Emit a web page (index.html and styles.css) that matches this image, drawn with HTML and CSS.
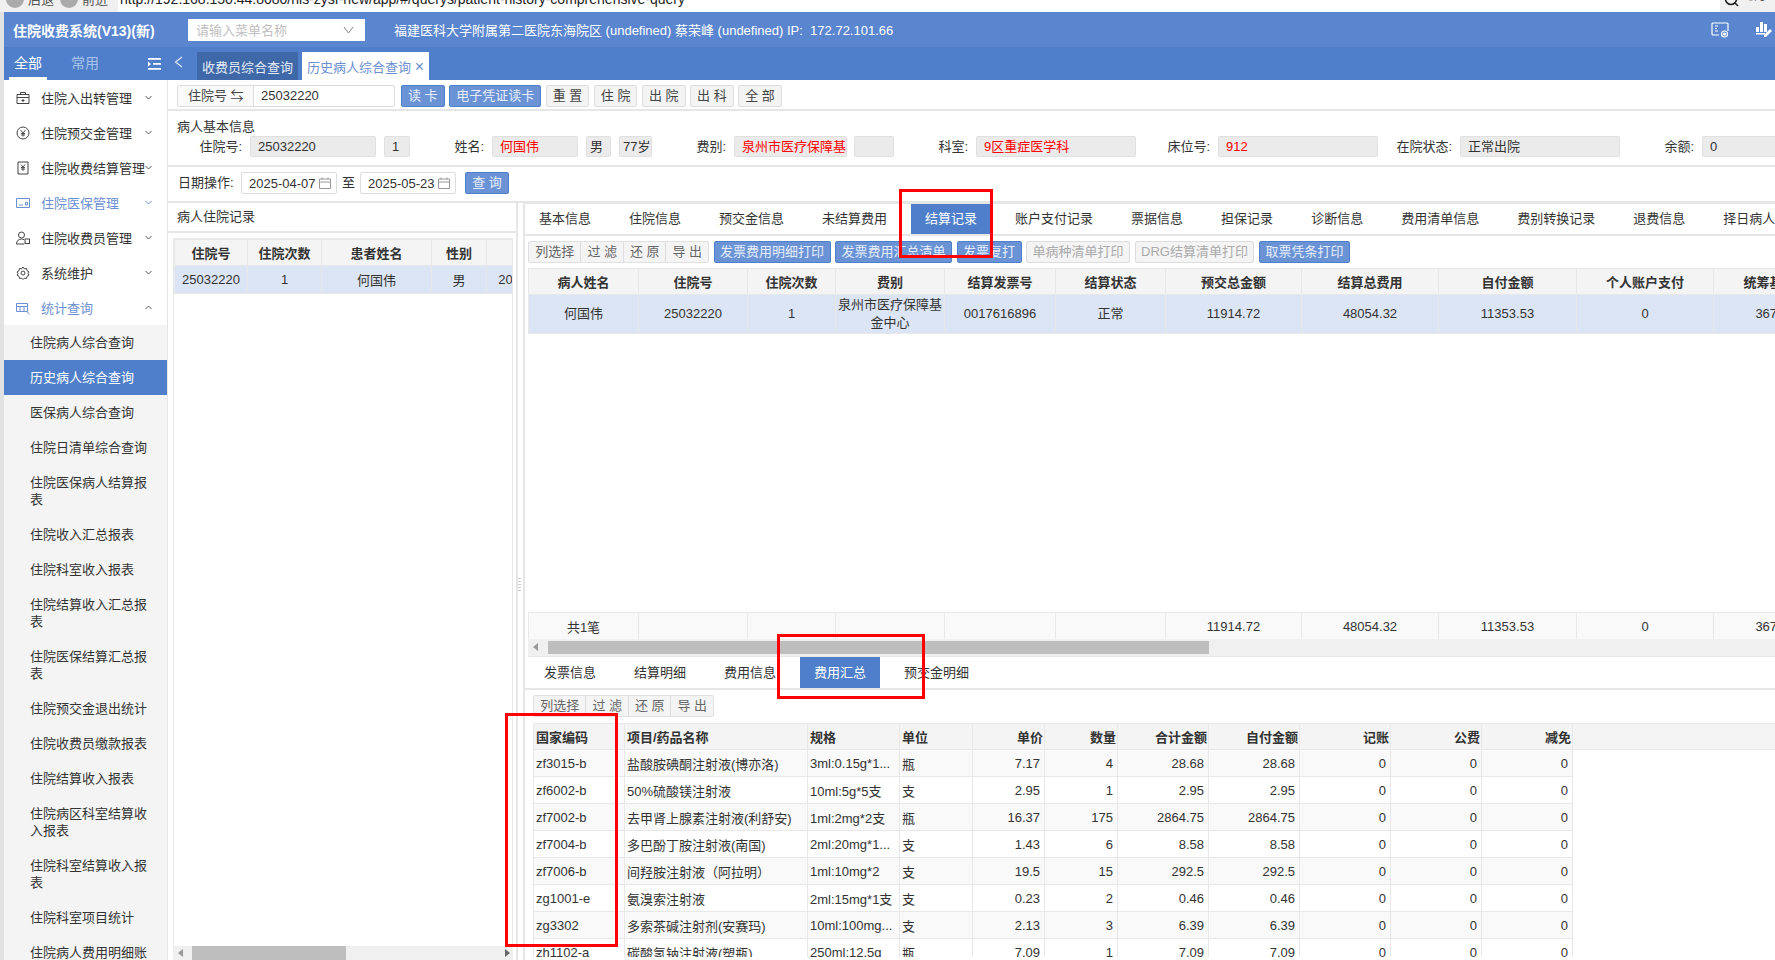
FILE: index.html
```html
<!DOCTYPE html>
<html lang="zh-CN">
<head>
    <meta charset="UTF-8">
    <title>住院收费系统</title>
    <link rel="stylesheet" href="styles.css">
</head>
<body>
    <!-- browser bar, cut off at the top of the screenshot -->
    <div class="chrome">
        <div class="chrome-nav">
            <span class="chrome-dot"></span><span class="chrome-text">后退</span>
            <span class="chrome-dot"></span><span class="chrome-text">前进</span>
        </div>
        <div class="chrome-url">http://192.168.150.44:8080/his-zysf-new/app/#/querys/patient-history-comprehensive-query</div>
        <div class="chrome-zoom">
            <svg width="16" height="16" viewBox="0 0 16 16"><circle cx="7" cy="3" r="5.5" fill="none" stroke="#222" stroke-width="1.6"/><path d="M11 7l3 3" stroke="#222" stroke-width="1.6"/></svg>
            <span class="chrome-text">缩小</span>
        </div>
    </div>

    <div class="app">
        <div class="top-bar">
            <div class="sys-title">住院收费系统(V13)(新)</div>
            <div class="menu-search">
                <span>请输入菜单名称</span>
                <svg width="11" height="8" viewBox="0 0 11 8"><path d="M1 1l4.5 6L10 1" fill="none" stroke="#888"/></svg>
            </div>
            <div class="user-info">福建医科大学附属第二医院东海院区 (undefined) 蔡荣峰 (undefined) IP:&nbsp; 172.72.101.66</div>
            <div class="top-icons">
                <svg width="18" height="16" viewBox="0 0 18 16" fill="none" stroke="#fff" stroke-width="1.2"><path d="M8 13H2a1 1 0 0 1-1-1V2a1 1 0 0 1 1-1h14a1 1 0 0 1 1 1v7"/><path d="M4 4h3M4 6.500h2M7 9H4" stroke-width="1"/><circle cx="13.500" cy="12" r="3"/><circle cx="13.500" cy="12" r="1" fill="#fff"/></svg>
                <svg width="18" height="18" viewBox="0 0 18 18" fill="#fff"><rect x="1" y="6" width="3" height="5"/><rect x="5" y="1" width="3" height="10"/><rect x="9" y="3" width="3" height="8"/><path d="M1 12h9v1.500H1z"/><path d="M15 8l2 2-6 6H9v-2z"/></svg>
            </div>
        </div>

        <div class="nav-bar">
            <div class="nav-side">
                <span class="nav-tab on">全部</span>
                <span class="nav-tab">常用</span>
                <svg class="nav-fold" width="13" height="12" viewBox="0 0 13 12" fill="#fff"><path d="M0 0h13v1.800H0zM5 5h8v1.800H5zM0 10h13v1.800H0zM0 3.500L3 6 0 8.500z"/></svg>
            </div>
            <svg class="nav-back" width="9" height="12" viewBox="0 0 9 12"><path d="M8 1L1.500 6 8 11" fill="none" stroke="#dfe8f7" stroke-width="1.200"/></svg>
            <div class="page-tab">收费员综合查询</div>
            <div class="page-tab on">历史病人综合查询 <span class="tab-x">×</span></div>
        </div>

        <div class="main">
            <aside class="sidebar">
                <div class="menu-item">
                    <svg class="menu-icon" width="14" height="14" viewBox="0 0 14 14" fill="none" stroke="#444"><path d="M1 3.500h12v9H1zM1 6.500h12M4.500 3.500V1.500h5v2M7 8v3M5.500 9.500h3"/></svg>
                    <span>住院入出转管理</span><svg class="menu-arrow" width="7" height="5" viewBox="0 0 7 5"><path d="M.5 1l3 3 3-3" fill="none" stroke="#555"/></svg>
                </div>
                <div class="menu-item">
                    <svg class="menu-icon" width="14" height="14" viewBox="0 0 14 14" fill="none" stroke="#444"><circle cx="7" cy="7" r="6"/><path d="M4.500 4L7 7l2.500-3M7 7v3.500M5 7.500h4M5 9h4" stroke-width=".9"/></svg>
                    <span>住院预交金管理</span><svg class="menu-arrow" width="7" height="5" viewBox="0 0 7 5"><path d="M.5 1l3 3 3-3" fill="none" stroke="#555"/></svg>
                </div>
                <div class="menu-item">
                    <svg class="menu-icon" width="14" height="14" viewBox="0 0 14 14" fill="none" stroke="#444"><path d="M2 1h10v12H2z"/><path d="M5 3.500L7 6l2-2.500M7 6v4M5 6.500h4M5 8h4" stroke-width=".9"/></svg>
                    <span>住院收费结算管理</span><svg class="menu-arrow tight" width="7" height="5" viewBox="0 0 7 5"><path d="M.5 1l3 3 3-3" fill="none" stroke="#555"/></svg>
                </div>
                <div class="menu-item blue">
                    <svg class="menu-icon" width="14" height="14" viewBox="0 0 14 14" fill="none" stroke="#6c90d2"><path d="M.5 2.500h13v9H.5z"/><path d="M3 9h4M9.500 6.500h2V9h-2z"/></svg>
                    <span>住院医保管理</span><svg class="menu-arrow" width="7" height="5" viewBox="0 0 7 5"><path d="M.5 1l3 3 3-3" fill="none" stroke="#6c90d2"/></svg>
                </div>
                <div class="menu-item">
                    <svg class="menu-icon" width="14" height="14" viewBox="0 0 14 14" fill="none" stroke="#444"><circle cx="5.500" cy="4" r="3"/><path d="M.5 13c0-3 2-5 5-5 1 0 2 .3 2.500.8M.5 13H8"/><rect x="9" y="8" width="4.500" height="4.500"/></svg>
                    <span>住院收费员管理</span><svg class="menu-arrow" width="7" height="5" viewBox="0 0 7 5"><path d="M.5 1l3 3 3-3" fill="none" stroke="#555"/></svg>
                </div>
                <div class="menu-item">
                    <svg class="menu-icon" width="14" height="14" viewBox="0 0 14 14" fill="none" stroke="#444"><circle cx="7" cy="7" r="2"/><path d="M7 1l1.300 1.800 2.200-.4.500 2.200L13 6l-1 1.500 1 1.600-2 1.300-.5 2.100-2.200-.3L7 13.500l-1.300-1.300-2.200.3-.5-2.100-2-1.300 1-1.600L1 6l2-1.400.5-2.200 2.200.4z"/></svg>
                    <span>系统维护</span><svg class="menu-arrow" width="7" height="5" viewBox="0 0 7 5"><path d="M.5 1l3 3 3-3" fill="none" stroke="#555"/></svg>
                </div>
                <div class="menu-item blue">
                    <svg class="menu-icon" width="14" height="14" viewBox="0 0 14 14" fill="none" stroke="#6c90d2"><path d="M.5 2.500h11v8H.5zM.5 5.500h11M4 5.500v5M8 5.500v5M10.500 10.500l3 2.500"/></svg>
                    <span>统计查询</span><svg class="menu-arrow" width="7" height="5" viewBox="0 0 7 5"><path d="M.5 4l3-3 3 3" fill="none" stroke="#555"/></svg>
                </div>
                <ul class="sub-menu">
                    <li>住院病人综合查询</li>
                    <li class="on">历史病人综合查询</li>
                    <li>医保病人综合查询</li>
                    <li>住院日清单综合查询</li>
                    <li>住院医保病人结算报表</li>
                    <li>住院收入汇总报表</li>
                    <li>住院科室收入报表</li>
                    <li>住院结算收入汇总报表</li>
                    <li>住院医保结算汇总报表</li>
                    <li>住院预交金退出统计</li>
                    <li>住院收费员缴款报表</li>
                    <li>住院结算收入报表</li>
                    <li>住院病区科室结算收入报表</li>
                    <li>住院科室结算收入报表</li>
                    <li>住院科室项目统计</li>
                    <li>住院病人费用明细账</li>
                </ul>
            </aside>

            <div class="content">
                <div class="search-row">
                    <div class="search-group">
                        <span class="search-label">住院号 ⇆</span>
                        <span class="search-value">25032220</span>
                    </div>
                    <button class="btn primary">读 卡</button>
                    <button class="btn primary">电子凭证读卡</button>
                    <button class="btn">重 置</button>
                    <button class="btn">住 院</button>
                    <button class="btn">出 院</button>
                    <button class="btn">出 科</button>
                    <button class="btn">全 部</button>
                </div>

                <div class="info-block">
                    <div class="info-title">病人基本信息</div>
                    <div class="info-row">
                        <label class="info-label">住院号:</label><span class="field f-no">25032220</span>
                        <span class="field f-times">1</span>
                        <label class="info-label">姓名:</label><span class="field f-name red">何国伟</span>
                        <span class="field f-sex">男</span>
                        <span class="field f-age">77岁</span>
                        <label class="info-label">费别:</label><span class="field f-type red">泉州市医疗保障基金中心</span>
                        <span class="field f-type2"></span>
                        <label class="info-label">科室:</label><span class="field f-wide red">9区重症医学科</span>
                        <label class="info-label">床位号:</label><span class="field f-wide red">912</span>
                        <label class="info-label">在院状态:</label><span class="field f-wide">正常出院</span>
                        <label class="info-label">余额:</label><span class="field f-wide">0</span>
                    </div>
                </div>

                <div class="date-row">
                    <label class="date-label">日期操作:</label>
                    <span class="date-input">2025-04-07
                        <svg width="12" height="12" viewBox="0 0 12 12" fill="none" stroke="#999"><path d="M.5 2h11v9.500H.5zM.5 5h11M3 .5v2M9 .5v2"/></svg>
                    </span>
                    <span class="date-to">至</span>
                    <span class="date-input">2025-05-23
                        <svg width="12" height="12" viewBox="0 0 12 12" fill="none" stroke="#999"><path d="M.5 2h11v9.500H.5zM.5 5h11M3 .5v2M9 .5v2"/></svg>
                    </span>
                    <button class="btn primary">查 询</button>
                </div>

                <div class="panels">
                    <div class="left-panel">
                        <div class="left-title">病人住院记录</div>
                        <div class="left-grid">
                            <table class="grid center">
                                <colgroup><col class="c73"><col class="c74"><col class="c110"><col class="c55"><col class="c90"></colgroup>
                                <tr><th>住院号</th><th>住院次数</th><th>患者姓名</th><th>性别</th><th></th></tr>
                                <tr class="picked"><td>25032220</td><td>1</td><td>何国伟</td><td>男</td><td>2025-04-07</td></tr>
                            </table>
                        </div>
                        <div class="hscroll left-scroll">
                            <span class="arrow-l"></span>
                            <span class="thumb"></span>
                            <span class="arrow-r"></span>
                        </div>
                    </div>

                    <div class="splitter"><span class="grip"></span></div>

                    <div class="right-panel">
                        <div class="tabs">
                            <span class="tab">基本信息</span>
                            <span class="tab">住院信息</span>
                            <span class="tab">预交金信息</span>
                            <span class="tab">未结算费用</span>
                            <span class="tab on">结算记录</span>
                            <span class="tab">账户支付记录</span>
                            <span class="tab">票据信息</span>
                            <span class="tab">担保记录</span>
                            <span class="tab">诊断信息</span>
                            <span class="tab">费用清单信息</span>
                            <span class="tab">费别转换记录</span>
                            <span class="tab">退费信息</span>
                            <span class="tab">择日病人状态</span>
                        </div>
                        <div class="tools">
                            <div class="btn-group">
                                <span class="g-first">列选择</span><span>过 滤</span><span>还 原</span><span>导 出</span>
                            </div>
                            <button class="btn primary slim">发票费用明细打印</button>
                            <button class="btn primary slim">发票费用汇总清单</button>
                            <button class="btn primary slim">发票复打</button>
                            <button class="btn off slim">单病种清单打印</button>
                            <button class="btn off slim">DRG结算清单打印</button>
                            <button class="btn primary slim">取票凭条打印</button>
                        </div>

                        <div class="settle-grid">
                            <table class="grid center">
                                <colgroup><col class="c110"><col class="c109"><col class="c88"><col class="c109"><col class="c111"><col class="c110"><col class="c136"><col class="c137"><col class="c138"><col class="c137"><col class="c138"></colgroup>
                                <tr><th>病人姓名</th><th>住院号</th><th>住院次数</th><th>费别</th><th>结算发票号</th><th>结算状态</th><th>预交总金额</th><th>结算总费用</th><th>自付金额</th><th>个人账户支付</th><th>统筹基金支付</th></tr>
                                <tr class="picked tall"><td>何国伟</td><td>25032220</td><td>1</td><td>泉州市医疗保障基金中心</td><td>0017616896</td><td>正常</td><td>11914.72</td><td>48054.32</td><td>11353.53</td><td>0</td><td>36700.79</td></tr>
                            </table>
                        </div>
                        <div class="settle-sum">
                            <table class="grid center">
                                <colgroup><col class="c110"><col class="c109"><col class="c88"><col class="c109"><col class="c111"><col class="c110"><col class="c136"><col class="c137"><col class="c138"><col class="c137"><col class="c138"></colgroup>
                                <tr class="sum"><td>共1笔</td><td></td><td></td><td></td><td></td><td></td><td>11914.72</td><td>48054.32</td><td>11353.53</td><td>0</td><td>36700.79</td></tr>
                            </table>
                        </div>
                        <div class="hscroll right-scroll">
                            <span class="arrow-l"></span>
                            <span class="thumb"></span>
                        </div>

                        <div class="tabs lower">
                            <span class="tab">发票信息</span>
                            <span class="tab">结算明细</span>
                            <span class="tab">费用信息</span>
                            <span class="tab on">费用汇总</span>
                            <span class="tab">预交金明细</span>
                        </div>
                        <div class="tools lower">
                            <div class="btn-group">
                                <span class="g-first">列选择</span><span>过 滤</span><span>还 原</span><span>导 出</span>
                            </div>
                        </div>
                        <div class="fee-grid">
                            <table class="grid">
                                <colgroup><col class="c91"><col class="c183"><col class="c92"><col class="c73"><col class="c72"><col class="c73"><col class="c91"><col class="c91"><col class="c91"><col class="c91"><col class="c91"><col></colgroup>
                                <tr><th>国家编码</th><th>项目/药品名称</th><th>规格</th><th>单位</th><th class="num">单价</th><th class="num">数量</th><th class="num">合计金额</th><th class="num">自付金额</th><th class="num">记账</th><th class="num">公费</th><th class="num">减免</th><th></th></tr>
                                <tr class="odd"><td>zf3015-b</td><td>盐酸胺碘酮注射液(博亦洛)</td><td>3ml:0.15g*1...</td><td>瓶</td><td class="num">7.17</td><td class="num">4</td><td class="num">28.68</td><td class="num">28.68</td><td class="num">0</td><td class="num">0</td><td class="num">0</td></tr>
                                <tr><td>zf6002-b</td><td>50%硫酸镁注射液</td><td>10ml:5g*5支</td><td>支</td><td class="num">2.95</td><td class="num">1</td><td class="num">2.95</td><td class="num">2.95</td><td class="num">0</td><td class="num">0</td><td class="num">0</td></tr>
                                <tr class="odd"><td>zf7002-b</td><td>去甲肾上腺素注射液(利舒安)</td><td>1ml:2mg*2支</td><td>瓶</td><td class="num">16.37</td><td class="num">175</td><td class="num">2864.75</td><td class="num">2864.75</td><td class="num">0</td><td class="num">0</td><td class="num">0</td></tr>
                                <tr><td>zf7004-b</td><td>多巴酚丁胺注射液(南国)</td><td>2ml:20mg*1...</td><td>支</td><td class="num">1.43</td><td class="num">6</td><td class="num">8.58</td><td class="num">8.58</td><td class="num">0</td><td class="num">0</td><td class="num">0</td></tr>
                                <tr class="odd"><td>zf7006-b</td><td>间羟胺注射液（阿拉明）</td><td>1ml:10mg*2</td><td>支</td><td class="num">19.5</td><td class="num">15</td><td class="num">292.5</td><td class="num">292.5</td><td class="num">0</td><td class="num">0</td><td class="num">0</td></tr>
                                <tr><td>zg1001-e</td><td>氨溴索注射液</td><td>2ml:15mg*1支</td><td>支</td><td class="num">0.23</td><td class="num">2</td><td class="num">0.46</td><td class="num">0.46</td><td class="num">0</td><td class="num">0</td><td class="num">0</td></tr>
                                <tr class="odd"><td>zg3302</td><td>多索茶碱注射剂(安赛玛)</td><td>10ml:100mg...</td><td>支</td><td class="num">2.13</td><td class="num">3</td><td class="num">6.39</td><td class="num">6.39</td><td class="num">0</td><td class="num">0</td><td class="num">0</td></tr>
                                <tr><td>zh1102-a</td><td>碳酸氢钠注射液(塑瓶)</td><td>250ml:12.5g</td><td>瓶</td><td class="num">7.09</td><td class="num">1</td><td class="num">7.09</td><td class="num">7.09</td><td class="num">0</td><td class="num">0</td><td class="num">0</td></tr>
                            </table>
                        </div>
                    </div>
                </div>
            </div>
        </div>
    </div>

    <!-- red boxes drawn on top of the screenshot -->
    <div class="mark mark-settle"></div>
    <div class="mark mark-fee"></div>
    <div class="mark mark-code"></div>
</body>
</html>
```

FILE: styles.css
```css
* {
    box-sizing: border-box;
}
html, body {
    height: 960px;
    overflow: hidden;
}
body {
    margin: 0;
    position: relative;
    background-color: #e2e2e2;
    color: #333;
    font-family: "Liberation Sans", "Noto Sans CJK SC", sans-serif;
    font-size: 13px;
}
ul {
    margin: 0;
    padding: 0;
    list-style: none;
}
button {
    font-family: inherit;
}

/* browser bar */
.chrome {
    display: flex;
    height: 12px;
    overflow: hidden;
    background-color: #fff;
}
.chrome-nav {
    display: flex;
    align-items: center;
    width: 118px;
    height: 12px;
    background-color: #f0f0f0;
    font-size: 13px;
}
.chrome-dot {
    flex: none;
    width: 18px;
    height: 18px;
    margin: -14px 4px 0 6px;
    border-radius: 50%;
    background-color: #aaa;
}
.chrome-text {
    flex: none;
    margin-top: -12px;
    color: #555;
    line-height: 14px;
}
.chrome-url {
    margin: -9px 0 0 2px;
    color: #222;
    font-size: 14px;
    line-height: 16px;
    white-space: nowrap;
}
.chrome-zoom {
    display: flex;
    gap: 4px;
    width: 55px;
    height: 12px;
    margin-left: auto;
    padding-left: 4px;
    background-color: #f0f0f0;
}
.chrome-zoom svg {
    flex: none;
    margin-top: -4px;
}

.app {
    display: flex;
    flex-direction: column;
    height: 948px;
    margin-left: 4px;
}

/* header */
.top-bar {
    display: flex;
    align-items: center;
    flex: none;
    height: 35px;
    background-color: #5a85cf;
    color: #fff;
}
.sys-title {
    width: 184px;
    padding-left: 9px;
    font-size: 14px;
    font-weight: bold;
}
.menu-search {
    display: flex;
    align-items: center;
    justify-content: space-between;
    width: 177px;
    height: 22px;
    padding: 0 11px 0 8px;
    background-color: #fff;
    color: #c0c0c0;
}
.user-info {
    margin-left: 29px;
}
.top-icons {
    display: flex;
    align-items: center;
    gap: 26px;
    margin-left: auto;
    padding-right: 2px;
}
.nav-bar {
    display: flex;
    align-items: flex-end;
    flex: none;
    height: 33px;
    background-color: #4f7fcb;
}
.nav-side {
    display: flex;
    align-items: flex-end;
    width: 163px;
    height: 33px;
}
.nav-tab {
    width: 38px;
    height: 30px;
    margin-left: 5px;
    padding-top: 4px;
    color: #a9c3ea;
    font-size: 14px;
    line-height: 18px;
    text-align: center;
}
.nav-tab + .nav-tab {
    margin-left: 19px;
}
.nav-tab.on {
    border-bottom: 3px solid #fff;
    color: #fff;
}
.nav-fold {
    margin: 0 0 10px 44px;
}
.nav-back {
    margin: 0 14px 12px 7px;
}
.page-tab {
    height: 28px;
    margin-right: 4px;
    padding: 0 5px;
    background-color: #3f68a8;
    color: #e4ebf7;
    line-height: 31px;
}
.page-tab.on {
    padding: 0 5px 0 5px;
    background-color: #fff;
    color: #6c90d2;
}
.tab-x {
    font-size: 16px;
    line-height: 14px;
}

.main {
    display: flex;
    flex: 1;
    min-height: 0;
}

/* left menu */
.sidebar {
    flex: none;
    width: 164px;
    overflow: hidden;
    border-right: 1px solid #e6e6e6;
    background-color: #fff;
}
.menu-item {
    display: flex;
    align-items: center;
    height: 35px;
    padding-left: 12px;
}
.menu-item.blue {
    color: #6c90d2;
}
.menu-icon {
    flex: none;
    margin-right: 11px;
}
.menu-arrow {
    margin-left: auto;
    margin-right: 15px;
}
.menu-arrow.tight {
    margin-right: 14px;
    margin-left: 0;
}
.sub-menu {
    background-color: #f4f4f4;
}
.sub-menu li {
    padding: 9px 19px 9px 26px;
    line-height: 17px;
}
.sub-menu li.on {
    background-color: #4f7fcb;
    color: #fff;
}

/* right of the menu */
.content {
    display: flex;
    flex-direction: column;
    flex: 1;
    min-width: 0;
    background-color: #fff;
}
.search-row {
    display: flex;
    flex: none;
    gap: 4.5px;
    height: 31px;
    padding: 5px 0 0 9px;
    border-bottom: 2px solid #e6e6e6;
}
.search-group {
    display: flex;
    width: 218px;
    height: 22px;
    margin-right: 1.5px;
    border: 1px solid #ddd;
    border-radius: 2px;
    line-height: 20px;
}
.search-label {
    width: 76px;
    padding-left: 10px;
    border-right: 1px solid #ddd;
    background-color: #fafafa;
    color: #444;
}
.search-value {
    padding-left: 7px;
}
.btn {
    flex: none;
    height: 22px;
    padding: 0 6px;
    border: 1px solid #ddd;
    border-radius: 2px;
    background-color: #f4f4f4;
    color: #444;
    font-size: 13px;
    line-height: 20px;
}
.btn.primary {
    border-color: #4f7fcb;
    background-color: #6a93d6;
    color: #e6edf9;
}
.btn.off {
    background-color: #f4f4f4;
    color: #aaa;
}
.btn.slim {
    padding: 0 5.5px;
}

.info-block {
    flex: none;
    height: 56px;
    padding-top: 7px;
    border-bottom: 2px solid #e6e6e6;
}
.info-title {
    height: 18px;
    padding-left: 9px;
    line-height: 17px;
}
.info-row {
    display: flex;
    height: 21px;
    white-space: nowrap;
}
.info-label {
    flex: none;
    width: 82px;
    padding-right: 8px;
    text-align: right;
    line-height: 21px;
}
.field {
    flex: none;
    height: 21px;
    overflow: hidden;
    padding: 0 7px;
    border: 1px solid #e0e0e0;
    border-radius: 2px;
    background-color: #ebebeb;
    line-height: 20px;
}
.field.red {
    color: #f00;
}
.f-no { width: 126px; margin-right: 8px; }
.f-times { width: 26px; }
.f-name { width: 86px; margin-right: 8px; }
.f-sex { width: 25px; margin-right: 8px; padding: 0 3px; }
.f-age { width: 33px; padding: 0 3px; }
.f-type { width: 113px; margin-right: 7px; }
.f-type2 { width: 40px; }
.f-wide { width: 160px; }

.date-row {
    display: flex;
    flex: none;
    height: 36px;
    padding: 5px 0 0 10px;
    border-bottom: 2px solid #e6e6e6;
}
.date-label {
    width: 63px;
    line-height: 22px;
}
.date-input {
    display: flex;
    align-items: center;
    justify-content: space-between;
    width: 96px;
    height: 22px;
    padding: 0 5px 0 7px;
    border: 1px solid #ddd;
    border-radius: 2px;
}
.date-to {
    width: 23px;
    text-align: center;
    line-height: 22px;
}
.date-row .btn {
    width: 44px;
    margin-left: 9px;
}

.panels {
    display: flex;
    flex: 1;
    min-height: 0;
}

/* inpatient records on the left */
.left-panel {
    display: flex;
    flex-direction: column;
    flex: none;
    width: 350px;
    border-right: 2px solid #e6e6e6;
}
.left-title {
    flex: none;
    height: 30px;
    padding-left: 9px;
    border-bottom: 2px solid #e6e6e6;
    line-height: 28px;
}
.left-grid {
    flex: 1;
    width: 340px;
    margin: 5px 0 0 5px;
    overflow: hidden;
    border: 1px solid #e8e8e8;
    border-bottom: none;
}
.left-scroll {
    width: 340px;
    margin-left: 5px;
}

.splitter {
    display: flex;
    flex: none;
    align-items: center;
    width: 5px;
    padding-top: 0;
}
.grip {
    width: 3px;
    height: 13px;
    margin-top: 6px;
    background: repeating-linear-gradient(#ccc 0 1px, #fff 1px 3px);
}

.right-panel {
    flex: 1;
    min-width: 0;
    overflow: hidden;
    border-left: 2px solid #e6e6e6;
}

/* tabs */
.tabs {
    display: flex;
    height: 33px;
    padding-left: 0;
    border-top: 1px solid #e6e6e6;
    border-bottom: 2px solid #e6e6e6;
    white-space: nowrap;
}
.tab {
    flex: none;
    height: 30px;
    margin-right: 10px;
    padding: 0 14px;
    line-height: 30px;
}
.tab.on {
    background-color: #4f7fcb;
    color: #fff;
}
.tabs.lower {
    height: 33px;
    padding-left: 5px;
    border-top: none;
}
.tabs.lower .tab {
    height: 31px;
    line-height: 31px;
}

.tools {
    display: flex;
    gap: 4.5px;
    height: 32px;
    padding: 5px 0 0 3px;
}
.tools.lower {
    height: 33px;
    padding: 5px 0 0 8px;
}
.btn-group {
    display: flex;
    flex: none;
    width: 181px;
    height: 22px;
    border: 1px solid #e0e0e0;
    border-radius: 2px;
    background-color: #f4f4f4;
    color: #666;
    line-height: 20px;
    text-align: center;
}
.btn-group span {
    width: 43px;
    border-left: 1px solid #ddd;
}
.btn-group .g-first {
    width: 52px;
    border-left: none;
}

/* tables */
.grid {
    border-collapse: collapse;
    table-layout: fixed;
    width: max-content;
}
.grid th, .grid td {
    overflow: hidden;
    padding: 0 4px 0 2px;
    border: 1px solid #e8e8e8;
    white-space: nowrap;
}
.grid th {
    height: 26px;
    background-color: #f4f4f4;
    font-weight: bold;
    text-align: left;
}
.grid td {
    height: 27px;
}
.grid .num {
    text-align: right;
}
.grid th.num {
    padding-right: 1px;
}
.grid .odd td {
    background-color: #f9f9f9;
}
.grid.center th, .grid.center td {
    padding: 0 2px;
    text-align: center;
}
.grid .picked td {
    height: 28px;
    background-color: #dce5f5;
}
.grid .tall td {
    height: 39px;
    white-space: normal;
    line-height: 18px;
}
.grid .sum td {
    height: 27px;
    background-color: #f9f9f9;
}
.c55 { width: 55px; }
.c72 { width: 72px; }
.c73 { width: 73px; }
.c74 { width: 74px; }
.c88 { width: 88px; }
.c90 { width: 90px; }
.c91 { width: 91px; }
.c92 { width: 92px; }
.c109 { width: 109px; }
.c110 { width: 110px; }
.c111 { width: 111px; }
.c136 { width: 136px; }
.c137 { width: 137px; }
.c138 { width: 138px; }
.c183 { width: 183px; }

.settle-grid {
    height: 344px;
    margin-left: 3px;
    overflow: hidden;
}
.settle-sum {
    height: 27px;
    margin-left: 3px;
    overflow: hidden;
}
.fee-grid {
    height: 234px;
    margin: 0 0 0 8px;
    overflow: hidden;
}
.fee-grid .grid {
    width: 1245px;
}

/* scrollbars */
.hscroll {
    display: flex;
    align-items: center;
    flex: none;
    height: 14px;
    background-color: #f0f0f0;
}
.right-scroll {
    height: 18px;
    margin-left: 3px;
    padding-bottom: 1px;
    border-bottom: 1px solid #e6e6e6;
}
.thumb {
    height: 100%;
    background-color: #bebebe;
}
.left-scroll .thumb {
    width: 154px;
    margin-left: 9px;
}
.right-scroll .thumb {
    width: 661px;
    height: 13px;
    margin-left: 10px;
}
.arrow-l {
    width: 0;
    height: 0;
    margin-left: 5px;
    border: 4px solid transparent;
    border-left: none;
    border-right: 5px solid #999;
}
.arrow-r {
    width: 0;
    height: 0;
    margin: 0 3px 0 auto;
    border: 4px solid transparent;
    border-right: none;
    border-left: 5px solid #666;
}

/* red boxes */
.mark {
    position: absolute;
    border: 3px solid #f00;
}
.mark-settle {
    left: 899px;
    top: 189px;
    width: 94px;
    height: 69px;
}
.mark-fee {
    left: 777px;
    top: 634px;
    width: 148px;
    height: 65px;
}
.mark-code {
    left: 505px;
    top: 713px;
    width: 113px;
    height: 234px;
}
```
